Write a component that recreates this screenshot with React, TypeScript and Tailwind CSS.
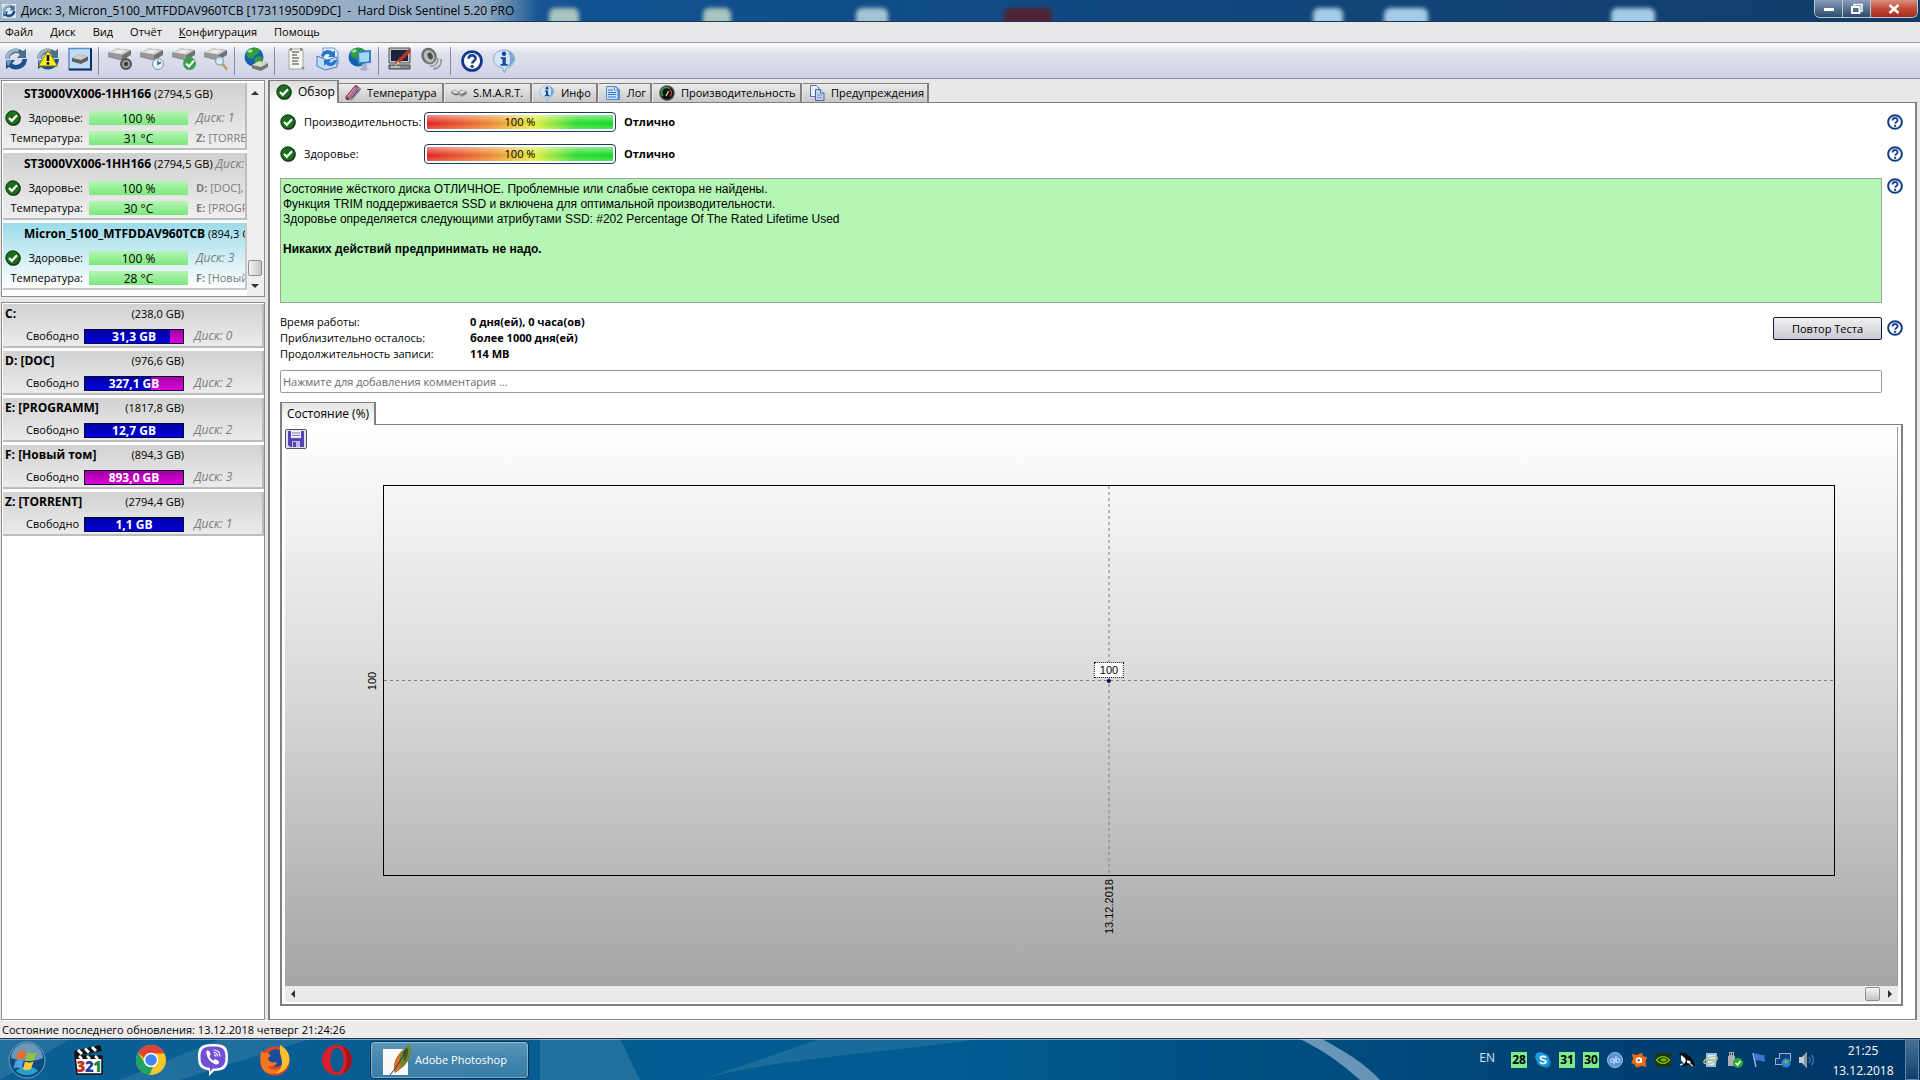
import type { ReactNode } from "react";
import { clsx } from "clsx";

const MENU = ["Файл", "Диск", "Вид", "Отчёт", "Конфигурация", "Помощь"];

const DISKS = [
  { model: "ST3000VX006-1HH166", size: "(2794,5 GB)", extra: "", temp: "31 °C", top: "Диск: 1", letter: "Z:", name: "[TORRENT]" },
  { model: "ST3000VX006-1HH166", size: "(2794,5 GB)", extra: "Диск: 2", temp: "30 °C", topLetter: "D:", top: "[DOC],", letter: "E:", name: "[PROGRAMM]" },
  { model: "Micron_5100_MTFDDAV960TCB", size: "(894,3 GB)", extra: "", temp: "28 °C", top: "Диск: 3", letter: "F:", name: "[Новый том]", selected: true },
];

const VOLUMES = [
  { name: "C:", size: "(238,0 GB)", free: "31,3 GB", used: 87, disk: "Диск: 0" },
  { name: "D: [DOC]", size: "(976,6 GB)", free: "327,1 GB", used: 67, disk: "Диск: 2" },
  { name: "E: [PROGRAMM]", size: "(1817,8 GB)", free: "12,7 GB", used: 100, disk: "Диск: 2" },
  { name: "F: [Новый том]", size: "(894,3 GB)", free: "893,0 GB", used: 0, disk: "Диск: 3" },
  { name: "Z: [TORRENT]", size: "(2794,4 GB)", free: "1,1 GB", used: 100, disk: "Диск: 1" },
];

const STATS = [
  { label: "Время работы:", value: "0 дня(ей), 0 часа(ов)" },
  { label: "Приблизительно осталось:", value: "более 1000 дня(ей)" },
  { label: "Продолжительность записи:", value: "114 MB" },
];

/* ---------- small icons ---------- */

function CheckIcon() {
  return (
    <svg viewBox="0 0 16 16" className="size-4 shrink-0">
      <circle cx="8.4" cy="8.4" r="7.4" fill="#1d3a1d" />
      <circle cx="7.8" cy="7.8" r="7" fill="#1c6e1c" stroke="#0b3d0e" />
      <path d="M4 8l2.8 2.8L12 5.2" fill="none" stroke="#fff" strokeWidth="2.2" />
    </svg>
  );
}

function HelpIcon({ className = "size-4" }: { className?: string }) {
  return (
    <svg viewBox="0 0 24 24" className={clsx("shrink-0", className)}>
      <circle cx="12" cy="12" r="10.3" fill="#fff" stroke="#123a86" strokeWidth="3" />
      <path d="M8.3 9.6c0-5 7.6-4.8 7.6-.4 0 2.7-3.6 2.8-3.6 5.4" fill="none" stroke="#1a4690" strokeWidth="2.9" />
      <circle cx="12.2" cy="17.8" r="1.8" fill="#1a4690" />
    </svg>
  );
}

function InfoIcon({ className = "size-4" }: { className?: string }) {
  return (
    <svg viewBox="0 0 24 24" className={clsx("shrink-0", className)}>
      <path d="M12 1c6 0 10.5 3.8 10.5 9 0 4.5-3.5 8-8 8.7L12.5 24l-2-5.3C5 18 1.5 14.5 1.5 10 1.5 4.8 6 1 12 1z" fill="#d5e6f6" stroke="#8aa9c6" />
      <path d="M16 2c4 1.5 6.3 4.5 6 8.5-.5 4-3.5 7-7.5 7.7L12.500 23c0-4 4-5 5-9 1-4 .5-8-1.5-12z" fill="#79a9d3" />
      <circle cx="12" cy="4.8" r="2.2" fill="#17479c" />
      <path d="M8.800 8.200h5v6.800h1.900v1.800H8.600V15h1.900v-5H8.800z" fill="#17479c" />
    </svg>
  );
}

function ThermoIcon() {
  return (
    <svg viewBox="0 0 16 16" className="size-4 shrink-0" strokeLinecap="round">
      <path d="M3 12.500L11 3" stroke="#5b2648" strokeWidth="5" />
      <path d="M6 13.500L14 4" stroke="#8f8f98" strokeWidth="4" />
      <path d="M3 12L11 2.800" stroke="#c05a94" strokeWidth="3" />
      <path d="M3.200 11L10 3" stroke="#eab4d0" />
      <path d="M6.500 13L13.500 5" stroke="#6d2a52" />
    </svg>
  );
}

function SmartIcon() {
  return (
    <svg viewBox="0 0 16 16" className="size-4 shrink-0">
      <path d="M0 6l4-1 3 1.500 4-2 5 1.500v3l-5 3-4-2-3 .5-4-2z" fill="#9b9b9b" />
      <path d="M1 6.500l3-.8 3 1.500-2 1.500zM8 7l4-1.800 3 1-4 2.200z" fill="#e6e6e6" />
      <path d="M3 9l4 .7M11 10l4-2.500" stroke="#555" />
    </svg>
  );
}

function LogIcon() {
  return (
    <svg viewBox="0 0 16 16" className="size-4 shrink-0">
      <path d="M3 1h8l4 4v10H3z" fill="#4a8fd8" />
      <path d="M1.500 1.500h8L13 5v9.500H1.500z" fill="#cfe5fa" stroke="#4c8acb" />
      <path d="M9.500 1.500V5H13" fill="#fff" stroke="#4c8acb" />
      <path d="M3 5h5M3 7.500h8M3 9.500h8M3 12h8" stroke="#2f74c0" />
    </svg>
  );
}

function GaugeIcon() {
  return (
    <svg viewBox="0 0 16 16" className="size-4 shrink-0">
      <circle cx="8" cy="8" r="7.8" fill="#4f534c" />
      <circle cx="8" cy="8" r="6.5" fill="#111" />
      <path d="M4 11a5 5 0 017-7.200" fill="none" stroke="#2fa04a" strokeWidth="1.6" />
      <path d="M11 4.500a5 5 0 010 7" fill="none" stroke="#c13a26" strokeWidth="1.5" />
      <path d="M7 11l2.500-5" stroke="#d8d8c0" strokeWidth="1.3" />
    </svg>
  );
}

function PagesIcon() {
  return (
    <svg viewBox="0 0 16 16" className="size-4 shrink-0">
      <path d="M1.500.5h6L10 3v8.500H1.500z" fill="#e9f0fb" stroke="#5473a5" />
      <path d="M6.500 4.500h5L15 8v7.500H6.500z" fill="#bfd3f0" stroke="#46659b" />
      <path d="M11.500 4.500V8H15" fill="#fff" stroke="#46659b" />
      <path d="M8 10h5M8 12.500h5" stroke="#7a9ccf" />
    </svg>
  );
}

function SaveIcon() {
  return (
    <svg viewBox="0 0 16 16" className="size-4">
      <path d="M0 0h16v16H2l-2-2z" fill="#5544b4" />
      <path d="M3 0h10v7H3z" fill="#f1f0fb" />
      <path d="M4 2h8M4 4.500h8" stroke="#7d72c6" />
      <path d="M4 10h8v6H4z" fill="#bdb7e4" />
      <path d="M5 11h3v5H5z" fill="#5544b4" />
    </svg>
  );
}

/* ---------- toolbar icons, all on a 24px grid ---------- */

function Drive() {
  return (
    <>
      <path d="M0 6l9-4.500L23 3v5l-9 5.500L0 10z" fill="#6f6f6f" />
      <path d="M0 5.500l9-4L23 3l-9 5z" fill="#cfcfcf" />
      <path d="M4 5.300l6-2.600 8 .8-6 2.800z" fill="#ececec" />
      <path d="M0 5.500L14 8v5L0 9.500z" fill="#979797" />
    </>
  );
}

function Globe() {
  return (
    <>
      <circle cx="10" cy="10" r="9.5" fill="#1560b4" />
      <circle cx="7" cy="6" r="4.5" fill="#7dbdf0" opacity=".6" />
      <path d="M4 3c4-3 9-3 12 0l-2 4-4 1-1 4-4-1-3-4zM12 10l5-1 2 3-3 5-4 1-2-5z" fill="#2f9e36" />
      <path d="M3 4l4-2 2 2-3 2z" fill="#a7e08b" />
    </>
  );
}

function Arrows() {
  return (
    <>
      <path d="M1 12A11 10.500 0 0119 4l3-2v9h-9l3-3.500A6.500 6.500 0 005.500 12z" fill="#4a6d88" />
      <path d="M1 12A11 10.500 0 0115 2l-1 3A7 7 0 005 12z" fill="#9db4c4" />
      <path d="M23 12A11 10.500 0 015 20l-3 2v-9h9l-3 3.500A6.500 6.500 0 0018.500 12z" fill="#1c4f8c" />
      <path d="M2 13l6 .5-4 6z" fill="#6d9bcb" />
    </>
  );
}

const TOOLS: { label: string; art: ReactNode }[][] = [
  [
    { label: "Обновить", art: <Arrows /> },
    {
      label: "Предупреждение",
      art: (
        <>
          <Arrows />
          <path d="M12 3.500L21.500 19h-19z" fill="#f9ee1c" stroke="#7d7a10" />
          <path d="M12 8v6" stroke="#111" strokeWidth="2.5" />
          <circle cx="12" cy="16.5" r="1.4" fill="#111" />
        </>
      ),
    },
    {
      label: "Диск",
      art: (
        <>
          <path d="M1 1.500h22v21H1z" fill="#bfdcf5" stroke="#5f8fc0" strokeWidth="1.5" />
          <path d="M1 22.500h22v-21" fill="none" stroke="#0b2f63" strokeWidth="2" />
          <path d="M4 11l7-3.500 9 2v4L13 17l-9-2.500z" fill="#5f5f5f" />
          <path d="M4 11l7-3.500 9 2-7 3.500z" fill="#cdcdcd" />
        </>
      ),
    },
  ],
  [
    {
      label: "Звук диска",
      art: (
        <>
          <Drive />
          <circle cx="18" cy="17" r="6" fill="#555" />
          <circle cx="18" cy="17" r="4" fill="#9a9a9a" />
          <circle cx="18" cy="17" r="2" fill="#333" />
        </>
      ),
    },
    {
      label: "Время",
      art: (
        <>
          <Drive />
          <circle cx="18" cy="17" r="5.5" fill="#e4eef6" stroke="#8797a5" />
          <path d="M18 13.500V17l3-1.500" fill="none" stroke="#35608a" strokeWidth="1.4" />
        </>
      ),
    },
    {
      label: "Проверка",
      art: (
        <>
          <Drive />
          <circle cx="17.5" cy="16.5" r="6.5" fill="#38a04a" />
          <path d="M14 16.500l3 3 5-6" fill="none" stroke="#fff" strokeWidth="2" />
        </>
      ),
    },
    {
      label: "Поиск",
      art: (
        <>
          <Drive />
          <circle cx="15.5" cy="14" r="4" fill="#d4e8f5" stroke="#8ea3b3" strokeWidth="1.3" />
          <path d="M18.500 17l4.500 5.500" stroke="#c09a4c" strokeWidth="2.5" />
        </>
      ),
    },
  ],
  [
    {
      label: "Сеть",
      art: (
        <>
          <Globe />
          <path d="M8 18l7-4 9 2v4l-7 4-9-2.500z" fill="#77786c" />
          <path d="M8 18l7-4 9 2-7 4z" fill="#d6d6cc" />
        </>
      ),
    },
  ],
  [
    {
      label: "Отчёт",
      art: (
        <>
          <path d="M5 2h14v20H5z" fill="#f6f6f2" stroke="#a5a5a0" />
          <path d="M8 5h7M8 8h5M8 11h7M8 14h6M8 17h7" stroke="#777" strokeWidth="1.3" />
          <path d="M7 1v3M17 1v3M18 20l2 2" stroke="#8a8a80" strokeWidth="2" />
        </>
      ),
    },
    {
      label: "Отправить",
      art: (
        <>
          <path d="M7 1h11l4 4v12H7z" fill="#e5f0fb" stroke="#6a97c8" />
          <path d="M1 9l10 4 10-3v10l-12 3-8-4z" fill="#c1dcf5" stroke="#3d7ec4" />
          <path d="M5 9c1-6 8-8 12-4l2-2v7h-7l2-2c-3-2-5-1-6 2z" fill="#2775cb" />
          <path d="M21 13c-1 6-8 8-11 4l-2 2v-6h7l-2 2c2 1 4 0 5-2z" fill="#2775cb" />
        </>
      ),
    },
    {
      label: "Удалённый монитор",
      art: (
        <>
          <Globe />
          <path d="M9 4l14-1v13l-13 1z" fill="#3a7fc0" />
          <path d="M11 6l10-1v9.500l-9.500.5z" fill="#9fd8f7" />
          <path d="M14 17h5v4l3 1.500-7 1.500-4-2 3-1z" fill="#a6b3d4" />
        </>
      ),
    },
  ],
  [
    {
      label: "Настройка",
      art: (
        <>
          <path d="M1 1h21v15H1z" fill="#c2c2c2" stroke="#555" />
          <path d="M3 3h17v11H3z" fill="#1b2440" />
          <path d="M1 18h21v4H1z" fill="#888" stroke="#444" />
          <path d="M3 20h9" stroke="#eee" />
          <path d="M8 17L22 3" stroke="#b23a25" strokeWidth="3.5" />
          <path d="M7 19l3-5 2 2z" fill="#e0c7a0" />
        </>
      ),
    },
    {
      label: "Звук",
      art: (
        <>
          <ellipse cx="9" cy="9" rx="7.5" ry="8.5" fill="#727272" transform="rotate(-25 9 9)" />
          <ellipse cx="9" cy="9.5" rx="5" ry="6.5" fill="#bdbdbd" transform="rotate(-25 9 9)" />
          <ellipse cx="10" cy="9.5" rx="2.5" ry="3.5" fill="#4b4b4b" transform="rotate(-25 9 9)" />
          <path d="M10 19c5 1 8-3 8-8M13 22c6 0 9-5 8-10" fill="none" stroke="#9b9b9b" strokeWidth="1.7" />
        </>
      ),
    },
  ],
];

function ToolButton({ label, children }: { label: string; children: ReactNode }) {
  return (
    <button type="button" aria-label={label} className="flex h-8 w-8 items-center justify-center">
      {children}
    </button>
  );
}

function Separator() {
  return (
    <div className="w-2 py-1 pl-0.5">
      <div className="h-7 w-px bg-[#8b8d99]" />
    </div>
  );
}

/* ---------- window chrome ---------- */

// blurred desktop shortcuts that shine through the glass caption
const SHINE = [
  { x: "28.6%", w: 30, c: "#a9c3bf" },
  { x: "36.6%", w: 28, c: "#a9c3bf" },
  { x: "44.6%", w: 32, c: "#a3c4d6" },
  { x: "52.3%", w: 48, c: "#4f2334" },
  { x: "68.4%", w: 30, c: "#a5cbe6" },
  { x: "72.1%", w: 44, c: "#a5cbe6" },
  { x: "83.9%", w: 44, c: "#a5cbe6" },
];

function TitleBar() {
  return (
    <header className="relative flex h-[22px] justify-between overflow-hidden border-b border-[#17365a] bg-linear-to-r from-[#6d8bab] via-[#0f5290] via-30% to-[#123c68]">
      {SHINE.map((s) => (
        <span
          key={s.x}
          className="absolute top-2 h-5 rounded-t-md blur-[2px]"
          style={{ left: s.x, width: s.w, backgroundColor: s.c }}
        />
      ))}
      <div className="relative flex items-center gap-[5px] bg-linear-to-r from-[#a3b6c9] via-[#93abc4] via-90% to-transparent pr-6 pl-0.5">
        <svg viewBox="0 0 24 24" className="size-3.5">
          <path d="M0 0h24v24H0z" fill="#dfe8ee" />
          <Arrows />
        </svg>
        <h1 className="text-[12px] leading-5 whitespace-pre text-black">
          {"Диск: 3, Micron_5100_MTFDDAV960TCB [17311950D9DC]  -  Hard Disk Sentinel 5.20 PRO"}
        </h1>
      </div>
      <div className="relative mr-0.5 flex h-[18px] overflow-hidden rounded-b-md border border-t-0 border-[#b9c6d4]">
        <button type="button" aria-label="Свернуть" className="flex w-7 items-end justify-center border-r border-[#b9c6d4] bg-linear-to-b from-[#8a9fb6] via-[#5d7794] via-45% to-[#2b4a6c] pb-1.5">
          <span className="h-[3px] w-2.5 bg-white" />
        </button>
        <button type="button" aria-label="Развернуть" className="flex w-7 items-center justify-center border-r border-[#b9c6d4] bg-linear-to-b from-[#8a9fb6] via-[#5d7794] via-45% to-[#2b4a6c]">
          <svg viewBox="0 0 14 12" className="h-3 w-3.5" fill="none" stroke="#fff" strokeWidth="1.5">
            <path d="M4 3V1.500h8V8h-2" />
            <path d="M2 4h7.500v6H2z" strokeWidth="2" />
          </svg>
        </button>
        <button type="button" aria-label="Закрыть" className="flex w-[46px] items-center justify-center bg-linear-to-b from-[#d98f80] via-[#c4513d] via-45% to-[#a82a18]">
          <svg viewBox="0 0 12 10" className="h-2.5 w-3">
            <path d="M1.500 1l9 8M10.500 1l-9 8" stroke="#fff" strokeWidth="2.6" />
          </svg>
        </button>
      </div>
    </header>
  );
}

function Toolbar() {
  return (
    <div className="flex h-[36px] items-center border-b border-[#8e8e94] bg-linear-to-b from-white via-[#dde1ed] via-30% to-[#cfd2e6]">
      {TOOLS.map((group, i) => (
        <div key={i} className="flex">
          {group.map((tool) => (
            <ToolButton key={tool.label} label={tool.label}>
              <svg viewBox="0 0 24 24" className="size-6">
                {tool.art}
              </svg>
            </ToolButton>
          ))}
          <Separator />
        </div>
      ))}
      <ToolButton label="Помощь">
        <HelpIcon className="size-[22px]" />
      </ToolButton>
      <ToolButton label="О программе">
        <InfoIcon className="size-6" />
      </ToolButton>
    </div>
  );
}

/* ---------- left column ---------- */

function GreenBar({ children }: { children: ReactNode }) {
  return (
    <div className="mr-2 ml-1.5 h-3.5 w-[99px] shrink-0 bg-linear-to-b from-[#b4f5b4] to-[#7be87b] text-center text-[12px] leading-[15px]">
      {children}
    </div>
  );
}

function DiskItem({ disk }: { disk: (typeof DISKS)[number] }) {
  return (
    <button
      type="button"
      className={clsx(
        "mb-[3px] block h-[67px] w-full overflow-hidden border-r-2 border-b-2 text-left whitespace-nowrap",
        disk.selected
          ? "border-[#c3c9cc] bg-linear-to-b from-[#9adbea] to-white"
          : "border-[#bcbcbc] bg-linear-to-b from-[#d0d0d0] to-[#efefef]",
      )}
    >
      <div className="mb-1 h-5 pl-[21px] leading-5">
        <strong className="text-[12px]">{disk.model}</strong> {disk.size}{" "}
        <em className="text-[12px] text-[#7c7c7c]">{disk.extra}</em>
      </div>
      <div className="flex h-5 items-center">
        <div className="flex w-20 shrink-0 items-center justify-between pl-0.5">
          <CheckIcon />
          <span>Здоровье:</span>
        </div>
        <GreenBar>100 %</GreenBar>
        {disk.topLetter ? (
          <span className="text-[#7c7c7c]">
            <b>{disk.topLetter}</b> {disk.top}
          </span>
        ) : (
          <em className="text-[12px] text-[#7c7c7c]">{disk.top}</em>
        )}
      </div>
      <div className="flex h-5 items-center">
        <span className="w-20 shrink-0 text-right">Температура:</span>
        <GreenBar>{disk.temp}</GreenBar>
        <span className="text-[#7c7c7c]">
          <b>{disk.letter}</b> {disk.name}
        </span>
      </div>
    </button>
  );
}

function Arrow({ className }: { className?: string }) {
  return (
    <svg viewBox="0 0 8 4" className={clsx("h-1 w-2", className)}>
      <path d="M0 4l4-4 4 4z" fill="#333" />
    </svg>
  );
}

function DiskList() {
  return (
    <div className="flex h-[217px] border border-[#8e8e8e] bg-white pt-0.5 pl-px">
      <div className="min-w-0 flex-1">
        {DISKS.map((disk) => (
          <DiskItem key={disk.letter} disk={disk} />
        ))}
      </div>
      <div className="flex w-[17px] flex-col items-center bg-[#efefef] pt-2 pr-px pb-2">
        <Arrow />
        <div className="mt-auto mb-2 h-4 w-3.5 rounded-xs border border-[#8f8f8f] bg-linear-to-r from-[#f2f2f2] to-[#c6c6c6]" />
        <Arrow className="rotate-180" />
      </div>
    </div>
  );
}

function VolumeList() {
  return (
    <ul className="flex-1 border border-[#8e8e8e] bg-white pt-px pl-px">
      {VOLUMES.map((v) => (
        <li key={v.name} className="mb-[3px] h-11 border-r-2 border-b-2 border-[#bcbcbc] bg-linear-to-b from-[#d2d2d2] to-[#ebebeb]">
          <div className="flex h-5 w-[181px] items-center justify-between pl-0.5">
            <strong className="text-[12px]">{v.name}</strong>
            <span>{v.size}</span>
          </div>
          <div className="flex h-6 items-center">
            <span className="w-[76px] text-right">Свободно</span>
            <div className="relative mr-2.5 ml-[5px] h-[15px] w-[100px] border border-[#0a0a3a] bg-linear-to-b from-[#a000a0] to-[#de00de] text-center text-[12px] leading-[14px] font-bold text-white">
              <div
                className="absolute inset-y-0 left-0 bg-linear-to-b from-[#0000a0] to-[#0000e0]"
                style={{ width: `${v.used}%` }}
              />
              <span className="relative">{v.free}</span>
            </div>
            <em className="text-[12px] text-[#7c7c7c]">{v.disk}</em>
          </div>
        </li>
      ))}
    </ul>
  );
}

/* ---------- overview page ---------- */

const TABS: { label: string; icon: ReactNode; width: string }[] = [
  { label: "Температура", icon: <ThermoIcon />, width: "w-[105px]" },
  { label: "S.M.A.R.T.", icon: <SmartIcon />, width: "w-[87px]" },
  { label: "Инфо", icon: <InfoIcon />, width: "w-[65px]" },
  { label: "Лог", icon: <LogIcon />, width: "w-[53px]" },
  { label: "Производительность", icon: <GaugeIcon />, width: "w-[149px]" },
  { label: "Предупреждения", icon: <PagesIcon />, width: "w-[126px]" },
];

function Tabs() {
  return (
    <div role="tablist" className="flex h-[22px] items-end">
      <button
        type="button"
        role="tab"
        aria-selected="true"
        className="relative -mb-px flex h-[23px] w-[71px] items-center gap-1.5 border-x-2 border-t border-[#808080] bg-linear-to-b from-[#dcdcdc] to-white pl-1.5 text-[12px]"
      >
        <CheckIcon />
        Обзор
      </button>
      {TABS.map((tab) => (
        <button
          key={tab.label}
          type="button"
          role="tab"
          aria-selected="false"
          className={clsx(
            "mr-px flex h-[19px] items-center gap-1.5 border-t border-r-2 border-[#808080] bg-linear-to-b from-[#ececec] to-[#c8c8c8] pl-1.5",
            tab.width,
          )}
        >
          {tab.icon}
          {tab.label}
        </button>
      ))}
    </div>
  );
}

function HelpButton() {
  return (
    <button type="button" aria-label="Помощь" className="ml-[5px] block size-4 shrink-0">
      <HelpIcon />
    </button>
  );
}

function GaugeRow({ label }: { label: string }) {
  return (
    <div className="flex h-8 items-center">
      <CheckIcon />
      <span className="w-32 pl-2">{label}</span>
      <div className="h-5 w-48 rounded-sm border border-[#1d3a5c] p-0.5">
        <div className="h-3.5 bg-[linear-gradient(rgba(255,255,255,0.5),rgba(255,255,255,0)_60%,rgba(255,255,255,0.25)),linear-gradient(90deg,#e02020,#ee8a2e_35%,#e2ee3a_58%,#2fdc2f_80%,#10dc20)] text-center leading-[14px]">
          100 %
        </div>
      </div>
      <strong className="pl-2">Отлично</strong>
      <div className="ml-auto">
        <HelpButton />
      </div>
    </div>
  );
}

function Chart() {
  return (
    <div className="relative flex flex-1 flex-col border-r border-[#9a9a9a] bg-linear-to-b from-white via-[#dadada] via-46% to-[#a5a5a5] pt-[58px] pr-[62px] pb-[110px] pl-[98px]">
      <button
        type="button"
        aria-label="Сохранить"
        className="absolute top-0.5 left-0 flex h-5 w-[22px] items-center justify-center rounded-xs border border-[#55555f] bg-[#e2e2ea]"
      >
        <SaveIcon />
      </button>
      <div className="relative flex-1 border border-black font-['Liberation_Sans',sans-serif] text-[11px] leading-3">
        <svg className="absolute inset-0 size-full" stroke="#7f7f7f" strokeDasharray="3 3">
          <line x1="50%" x2="50%" y1="0" y2="100%" />
          <line x1="0" x2="100%" y1="50%" y2="50%" />
        </svg>
        <span className="absolute top-1/2 right-full mr-1.5 -translate-y-1/2 rotate-180 [writing-mode:vertical-rl]">100</span>
        <span className="absolute top-full left-1/2 mt-1 -translate-x-1/2 rotate-180 whitespace-nowrap [writing-mode:vertical-rl]">
          13.12.2018
        </span>
        <div className="absolute top-1/2 left-1/2 flex -translate-x-1/2 -translate-y-[19px] flex-col items-center">
          <span className="border border-dotted border-black bg-white px-[5px] py-px">100</span>
          <span className="mt-px size-1 rounded-full bg-[#10005a]" />
        </div>
      </div>
    </div>
  );
}

function Overview() {
  return (
    <section className="flex flex-1 flex-col border-x-2 border-t border-b border-[#808080] bg-white pt-[3px] pr-3 pb-[13px] pl-2.5">
      <GaugeRow label="Производительность:" />
      <GaugeRow label="Здоровье:" />

      <div className="mt-2 flex">
        <div className="h-[125px] flex-1 border border-[#9aa59a] bg-[#b5f6b5] px-0.5 pt-[3px] font-['Liberation_Sans',sans-serif] text-[12px] leading-[15px]">
          <p>Состояние жёсткого диска ОТЛИЧНОЕ. Проблемные или слабые сектора не найдены.</p>
          <p>Функция TRIM поддерживается SSD и включена для оптимальной производительности.</p>
          <p>Здоровье определяется следующими атрибутами SSD: #202 Percentage Of The Rated Lifetime Used</p>
          <p className="mt-[15px] font-bold">Никаких действий предпринимать не надо.</p>
        </div>
        <HelpButton />
      </div>

      <div className="mt-[11px] flex justify-between">
        <dl className="leading-4">
          {STATS.map((s) => (
            <div key={s.label} className="flex">
              <dt className="w-[190px]">{s.label}</dt>
              <dd className="font-bold">{s.value}</dd>
            </div>
          ))}
        </dl>
        <div className="flex items-start pt-[3px]">
          <button
            type="button"
            className="h-[23px] w-[109px] rounded-xs border border-[#15154a] bg-linear-to-b from-[#f2f2f2] to-[#c9c9cf]"
          >
            Повтор Теста
          </button>
          <div className="pt-[3px]">
            <HelpButton />
          </div>
        </div>
      </div>

      <input
        type="text"
        aria-label="Комментарий"
        placeholder="Нажмите для добавления комментария ..."
        className="mt-2 mr-[21px] h-[23px] rounded-xs border border-[#9a9a9a] px-0.5 placeholder:text-[#6a6a6a]"
      />

      <div className="mt-[9px] flex">
        <button
          type="button"
          className="relative -mb-px h-[23px] border-t border-r-2 border-l-2 border-[#808080] bg-linear-to-b from-[#e4e4e4] to-white px-[5px] text-[12px]"
        >
          Состояние (%)
        </button>
      </div>
      <div className="flex flex-1 flex-col border-t border-r-2 border-b-2 border-l-2 border-[#808080] px-[3px] pt-0.5 pb-0.5">
        <Chart />
        <div className="flex h-4 items-center bg-[#ebebeb] px-1">
          <Arrow className="-rotate-90" />
          <div className="mr-1.5 ml-auto h-3.5 w-[15px] rounded-xs border border-[#8f8f8f] bg-linear-to-b from-[#f5f5f5] to-[#c6c6c6]" />
          <Arrow className="rotate-90" />
        </div>
      </div>
    </section>
  );
}

/* ---------- taskbar ---------- */

const LAUNCHERS: { label: string; art: ReactNode }[] = [
  {
    label: "Media Player Classic",
    art: (
      <>
        <path d="M1 7l26-6 2 6L2 12z" fill="#111" />
        <path d="M5 6l4 4M12 4.500l4 4M19 3l4 4" stroke="#fff" strokeWidth="3" />
        <path d="M2 12h27v18H4z" fill="#fff" stroke="#111" strokeWidth="1.5" />
        <path d="M3 12h26v3H3z" fill="#111" />
        <path d="M6 12l3 3M14 12l3 3M22 12l3 3" stroke="#fff" strokeWidth="2.5" />
        <g fontFamily="Open Sans, sans-serif" fontSize="15" fontWeight="800">
          <text x="3.5" y="28" fill="#c62a1c">3</text>
          <text x="12" y="28" fill="#1d3f9a">2</text>
          <text x="20" y="28" fill="#1e8a34">1</text>
        </g>
      </>
    ),
  },
  {
    label: "Google Chrome",
    art: (
      <>
        <circle cx="16" cy="16" r="15" fill="#f6c927" />
        <path d="M3 8.500A15 15 0 0129.500 9.500H16a7 7 0 00-6.500 5z" fill="#dc4437" />
        <path d="M3 8.500l7 11a7 7 0 008 3L14.500 31A15 15 0 013 8.500z" fill="#1ea362" />
        <circle cx="16" cy="16" r="7.3" fill="#fff" />
        <circle cx="16" cy="16" r="5.8" fill="#4484f3" />
      </>
    ),
  },
  {
    label: "Viber",
    art: (
      <>
        <path d="M16 0c12 0 15 3 15 13.500S27 27 17 27l-5 5v-5.500C4 25 1 22 1 13.500 1 3 4 0 16 0z" fill="#fff" />
        <path d="M16 2.500c10 0 12.500 2.500 12.500 11S25 24.500 16 24.500l-3 3.500v-4C6 23 3.500 20.500 3.500 13.500 3.500 5 6 2.500 16 2.500z" fill="#6f50d6" />
        <path d="M9.500 7c1.500-1 2.500-.5 3.500 1.500s.5 2.500-.5 3.500c.5 2 2 3.500 4 4.500 1-1.500 2-1.500 3.500-.5 2.500 1.500 2.500 2.500 1 4C18 22.500 8 14.500 9.500 7z" fill="#fff" />
        <path d="M16.500 6c4 0 6.500 2.500 6.500 6.500M16.500 8.500c2.500 0 4 1.500 4 4M17 10.800c1 0 1.500.7 1.500 1.700" fill="none" stroke="#fff" strokeWidth="1.2" />
      </>
    ),
  },
  {
    label: "Firefox",
    art: (
      <>
        <circle cx="16" cy="17" r="14.5" fill="#e8431c" />
        <circle cx="17" cy="14" r="9" fill="#1d4b9a" />
        <path d="M21 1c8 4 12 13 8 20-4 8-12 10-18 7 8 1 12-4 12-9 0-6-3-8-2-18z" fill="#fbc12c" />
        <path d="M3 6c0 3 3 3 6 3l3 3-3 2c0 3 3 5 6 4l3 1c-2 4-8 4-10 3 3 4 9 5 14 2-4 8-18 8-20-3C1 14 1 9 3 6z" fill="#f4761f" />
      </>
    ),
  },
  {
    label: "Opera",
    art: (
      <>
        <path
          fillRule="evenodd"
          d="M16 1c8.500 0 15 6.500 15 15s-6.500 15-15 15S1 24.500 1 16 7.500 1 16 1zm0 3c-4 0-6.500 5-6.500 12S12 28 16 28s6.500-5 6.500-12S20 4 16 4z"
          fill="#d81f2c"
        />
        <path d="M21 2c6 2 10 8 10 14s-4 12-10 14c3-3 4.500-8 4.500-14S24 5 21 2z" fill="#a3121d" />
      </>
    ),
  },
];

function TempBadge({ children }: { children: ReactNode }) {
  return <span className="size-4 bg-[#7cec8c] text-center text-[12px] leading-4 font-bold text-black">{children}</span>;
}

function TrayIcon({ children }: { children: ReactNode }) {
  return (
    <svg viewBox="0 0 16 16" className="size-4 shrink-0">
      {children}
    </svg>
  );
}

function Tray() {
  return (
    <div className="flex items-center gap-2">
      <span className="mr-2 pb-1 text-[12px] text-[#dbe7f2]">EN</span>
      <TempBadge>28</TempBadge>
      <TrayIcon>
        <circle cx="5" cy="5" r="4.8" fill="#1ba4e4" />
        <circle cx="11" cy="11" r="4.8" fill="#1281c4" />
        <circle cx="8" cy="8" r="6.5" fill="#1c9ade" />
        <path d="M11 5.500C9.500 4 5.500 4 5.500 6.200 5.500 8.500 11 7.500 11 9.800 11 12 6.500 12 5 10.300" fill="none" stroke="#fff" strokeWidth="1.7" />
      </TrayIcon>
      <TempBadge>31</TempBadge>
      <TempBadge>30</TempBadge>
      <TrayIcon>
        <circle cx="8" cy="8" r="7.5" fill="#5791d6" stroke="#9cc0ea" />
        <circle cx="5.2" cy="8.5" r="1.9" fill="none" stroke="#d9e8fa" />
        <path d="M7.200 6.500v6M9 4v6.500" stroke="#d9e8fa" />
        <circle cx="10.9" cy="8.5" r="1.9" fill="none" stroke="#d9e8fa" />
      </TrayIcon>
      <TrayIcon>
        <path d="M1 2l5 1 5-2.500 1.500 4L16 5l-1.500 5 1 5-4.500-1-6 1.500-1.500-3L0 11l2-4z" fill="#e56a17" />
        <circle cx="7.7" cy="8.2" r="2.3" fill="none" stroke="#fff" strokeWidth="1.5" />
        <path d="M10.300 6v4.700" stroke="#fff" strokeWidth="1.5" />
      </TrayIcon>
      <TrayIcon>
        <path d="M0 1h16v14H0z" fill="#1f3414" />
        <path d="M1.500 8C5 3.500 11 3.500 14.500 8 11 12.500 5 12.500 1.500 8z" fill="none" stroke="#79b900" strokeWidth="1.3" />
        <path d="M5 8c2-2.500 5-2.500 7 0-2 2-5 2-7 0z" fill="#79b900" />
      </TrayIcon>
      <TrayIcon>
        <path d="M0 1c5-1 11 2 15 9l1 4-6-1-8 1 2-5z" fill="#0a0a0a" />
        <path d="M2 3l4 3 1 3-2 3-3-4zM8 8l3 1 1 3-4-1z" fill="#fff" />
        <path d="M1 13l3-1M11 12l3 2" stroke="#c7d0d8" strokeWidth="1.5" />
      </TrayIcon>
      <TrayIcon>
        <path d="M3 1h11l-1 14H3z" fill="#8fc2e6" />
        <path d="M5 3h7v4H5zM5 9h6v4H5z" fill="#e4f1fa" />
        <ellipse cx="7.5" cy="8" rx="7" ry="3" fill="none" stroke="#c3c47a" strokeWidth="1.5" transform="rotate(-20 8 8)" />
      </TrayIcon>
      <TrayIcon>
        <path d="M2 0h5v4H2zM1 4h7v10H1z" fill="#a9afb5" />
        <path d="M3 1h1v2H3zM5 1h1v2H5z" fill="#333" />
        <circle cx="11" cy="11" r="5" fill="#27a832" />
        <path d="M8.500 11l2 2 3-4" fill="none" stroke="#fff" strokeWidth="1.6" />
      </TrayIcon>
      <TrayIcon>
        <path d="M2 1l3 14" stroke="#8fb4e8" strokeWidth="1.5" />
        <path d="M3 2c4-2 5 2 11 1-1 3-1 4 1 6-5 1-7-2-10.500 0z" fill="#3f74d4" />
      </TrayIcon>
      <TrayIcon>
        <path d="M4 1h12v8H4zM0 6h10v7H0z" fill="#9cb2cc" />
        <path d="M5 2h10v6H5zM1 7h8v5H1z" fill="#123e86" />
        <circle cx="11" cy="11" r="4.5" fill="#2e80d2" />
        <path d="M8 10c2-3 4-2 6 0l-3 2z" fill="#58b65c" />
      </TrayIcon>
      <TrayIcon>
        <path d="M0 5h3l5-5v16l-5-5H0z" fill="#c6cdd4" />
        <path d="M5 3l3-3v16l-3-3z" fill="#8f9aa5" />
        <path d="M10 5c1.500 2 1.500 4 0 6M12.500 3c2.500 3 2.500 7 0 10" fill="none" stroke="#3b78b5" strokeWidth="1.3" />
      </TrayIcon>
    </div>
  );
}

function Taskbar() {
  return (
    <footer className="relative flex h-[42px] shrink-0 items-center overflow-hidden border-t border-[#17365a] bg-linear-to-r from-[#0b5f93] via-[#005b90] via-50% to-[#003564] text-white shadow-[inset_0_1px_0_#7ba0bf]">
      <svg className="absolute inset-0 size-full" viewBox="0 0 1920 42" preserveAspectRatio="none">
        <path d="M0 0h70L0 42zM120 42L220 0h90L180 42z" fill="#fff" opacity=".1" />
        <path d="M540 0h80l20 42H540z" fill="#fff" opacity=".12" />
        <path d="M700 42C760 22 900 12 980 0H820z" fill="#fff" opacity=".1" />
        <path d="M1300 0h22c22 12 44 26 58 42h-20c-20-18-36-30-60-42z" fill="#cfe0f0" opacity=".5" />
      </svg>
      <button type="button" aria-label="Пуск" className="relative ml-2 size-[38px]">
        <svg viewBox="0 0 38 38" className="size-[38px]">
          <circle cx="19" cy="19" r="18" fill="#0e4c7c" stroke="#6fa3c8" />
          <path d="M3 17a16 15 0 0132 0c-9 4-22 4-32 0z" fill="#9fc3dc" opacity=".65" />
          <path d="M8 30a16 15 0 0022 0c-5-6-17-6-22 0z" fill="#29b6ee" opacity=".8" />
          <path d="M10 11c3-2 6-2 8-.5l-2 8c-2.500-1.500-5-1.500-8 0z" fill="#ec6a2c" />
          <path d="M19.500 11c3 2 6 1.500 9 0l-2.500 8c-3 1.500-6 1.500-8.500 0z" fill="#8fc43c" />
          <path d="M7.500 20c3-1.500 5.500-1.500 8 0l-2 7.500c-2.500-1.500-5-1.500-8 0z" fill="#49a3e6" />
          <path d="M17 20.500c3 1.500 5.500 1.500 8.500 0L23 28c-3 1.500-6 1.500-8 0z" fill="#fbcb34" />
        </svg>
      </button>
      <nav className="relative ml-3 flex">
        {LAUNCHERS.map((app) => (
          <button key={app.label} type="button" aria-label={app.label} className="flex w-[62px] justify-center">
            <svg viewBox="0 0 32 32" className="size-8">
              {app.art}
            </svg>
          </button>
        ))}
      </nav>
      <button
        type="button"
        className="relative ml-0.5 flex h-[38px] w-[159px] items-center gap-1 rounded-sm border border-[#0f2f4e] bg-linear-to-b from-white/35 via-white/25 to-white/20 pl-3 shadow-[inset_0_0_0_1px_rgba(255,255,255,0.35)]"
      >
        <svg viewBox="0 0 28 32" className="h-8 w-7">
          <path d="M0 5h25v26H0z" fill="#f7f9fb" />
          <path d="M27 0c2 9 0 17-7 23l-8 6c-2-6-1-13 4-19 3-4 7-7 11-10z" fill="#77842a" />
          <path d="M18 8c-6 6-8 13-6 21l6-5c-2-6-2-10 0-16z" fill="#d9702a" />
          <path d="M24 3c2 5 1 10-3 15l-1-10z" fill="#42601f" />
          <path d="M7 31c5-6 10-13 17-26" fill="none" stroke="#1f3550" />
        </svg>
        Adobe Photoshop
      </button>
      <div className="relative ml-auto flex h-full items-center">
        <Tray />
        <time className="mr-2.5 ml-4 w-[64px] pt-0.5 text-center text-[12px] leading-5">
          21:25
          <br />
          13.12.2018
        </time>
        <button type="button" aria-label="Показать рабочий стол" className="mr-px h-full w-3.5 border border-[#5e86ab] bg-linear-to-b from-white/30 to-white/5" />
      </div>
    </footer>
  );
}

export default function App() {
  return (
    <div className="flex min-h-screen flex-col bg-[#e8e8e8] font-['Open_Sans','Noto_Sans',sans-serif] text-[11px] leading-4 text-black">
      <TitleBar />
      <nav className="flex h-[21px] items-center gap-[17px] border-b border-[#97979b] pl-[5px]">
        {MENU.map((item) => (
          <button key={item} type="button">
            {item === "Конфигурация" ? (
              <>
                <u>К</u>онфигурация
              </>
            ) : (
              item
            )}
          </button>
        ))}
      </nav>
      <Toolbar />
      <div className="flex flex-1">
        <aside className="flex w-[265px] flex-col gap-[5px] pt-px pl-px">
          <DiskList />
          <VolumeList />
        </aside>
        <main className="flex min-w-0 flex-1 flex-col pt-px pr-[3px] pl-[3px]">
          <Tabs />
          <Overview />
        </main>
      </div>
      <div className="h-[18px] border-t border-white bg-[#efebe9] pl-0.5 leading-[18px]">
        Состояние последнего обновления: 13.12.2018 четверг 21:24:26
      </div>
      <Taskbar />
    </div>
  );
}
